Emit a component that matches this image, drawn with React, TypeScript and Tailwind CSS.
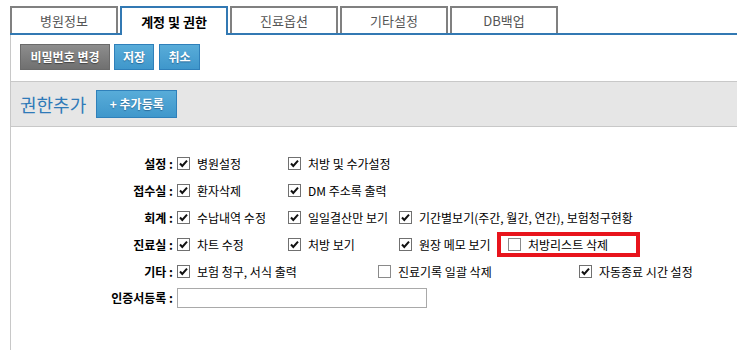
import React from "react";

// --- small pieces ---

const Check = ({ on }: { on: boolean }) => (
  <svg width="13" height="13" viewBox="0 0 13 13" className="shrink-0">
    <rect x="0.5" y="0.5" width="12" height="12" fill="#fff" stroke={on ? "#707070" : "#8a8a8a"} />
    {on && <path d="M3 6.5 L5.3 9 L10 3.6" fill="none" stroke="#111" strokeWidth="2" />}
  </svg>
);

const Item = ({ on = true, label, w }: { on?: boolean; label: React.ReactNode; w: string }) => (
  <div className={`flex items-center gap-[7px] ${w}`}>
    <Check on={on} />
    <span className="whitespace-nowrap">{label}</span>
  </div>
);

const Row = ({ title, children }: { title: string; children: React.ReactNode }) => (
  <div className="flex items-center h-[27px]">
    <div className="w-[166px] text-right pr-[4px] font-bold text-black whitespace-nowrap">{title} :</div>
    {children}
  </div>
);

const tabs = ["병원정보", "계정 및 권한", "진료옵션", "기타설정", "DB백업"];

export default function App() {
  return (
    <div
      className="w-[737px] h-[350px] overflow-hidden bg-white text-[12px] text-[#222]"
      style={{ fontFamily: '"Noto Sans CJK KR", "Noto Sans", sans-serif' }}
    >
      {/* Tabs */}
      <div className="pt-[6px] pl-[10px]">
        <div className="flex items-end gap-[2px] border-b-2 border-[#3279b3] h-[29px]">
          {tabs.map((t, i) =>
            i === 1 ? (
              <div
                key={t}
                className="w-[108px] h-[29px] -mb-[2px] bg-white border-2 border-b-0 border-[#3279b3] flex items-center justify-center font-bold text-[13px] text-black"
              >
                {t}
              </div>
            ) : (
              <div
                key={t}
                className="w-[108px] h-[27px] border-2 border-b-0 border-[#808080] flex items-center justify-center text-[13px] text-[#555]"
              >
                {t}
              </div>
            )
          )}
        </div>
      </div>

      {/* Panel */}
      <div className="ml-[10px] border-l border-[#c8c8c8] h-[320px]">
        {/* toolbar */}
        <div className="flex items-center gap-[4px] pl-[9px] pt-[9px]">
          <button className="h-[26px] w-[90px] bg-gradient-to-b from-[#8d8d8d] to-[#707070] border border-[#6a6a6a] text-white font-bold text-[12px] [text-shadow:0_1px_1px_#444]">
            비밀번호 변경
          </button>
          <button className="h-[26px] w-[40px] bg-gradient-to-b from-[#58acd9] to-[#3f97cb] border border-[#2f80ba] text-white font-bold text-[12px] [text-shadow:0_1px_1px_#2a6a99]">
            저장
          </button>
          <button className="ml-[1px] h-[26px] w-[41px] bg-gradient-to-b from-[#58acd9] to-[#3f97cb] border border-[#2f80ba] text-white font-bold text-[12px] [text-shadow:0_1px_1px_#2a6a99]">
            취소
          </button>
        </div>

        {/* section header */}
        <div className="mt-[11px] h-[46px] bg-[#e6e6e6] border-y border-[#c8c8c8] flex items-center pl-[9px] gap-[10px]">
          <span className="text-[18px] text-[#2f7ab8]">권한추가</span>
          <button className="h-[28px] w-[81px] bg-gradient-to-b from-[#58acd9] to-[#3f97cb] border border-[#2f80ba] text-white font-bold text-[12px] [text-shadow:0_1px_1px_#2a6a99]">
            + 추가등록
          </button>
        </div>

        {/* permission rows */}
        <div className="pt-[23px] text-black">
          <Row title="설정">
            <Item label="병원설정" w="w-[111px]" />
            <Item label="처방 및 수가설정" w="w-[111px]" />
          </Row>
          <Row title="접수실">
            <Item label="환자삭제" w="w-[111px]" />
            <Item label="DM 주소록 출력" w="w-[111px]" />
          </Row>
          <Row title="회계">
            <Item label="수납내역 수정" w="w-[111px]" />
            <Item label="일일결산만 보기" w="w-[111px]" />
            <Item label="기간별보기(주간, 월간, 연간), 보험청구현황" w="w-[300px]" />
          </Row>
          <Row title="진료실">
            <Item label="차트 수정" w="w-[111px]" />
            <Item label="처방 보기" w="w-[111px]" />
            <Item label="원장 메모 보기" w="w-[98px]" />
            <div className="h-[25px] w-[143px] border-4 border-[#e8141c] flex items-center pl-[7px]">
              <Item on={false} label="처방리스트 삭제" w="" />
            </div>
          </Row>
          <Row title="기타">
            <Item label="보험 청구, 서식 출력" w="w-[201px]" />
            <Item on={false} label="진료기록 일괄 삭제" w="w-[201px]" />
            <Item label="자동종료 시간 설정" w="w-[150px]" />
          </Row>
          <div className="flex items-center h-[26px]">
            <div className="w-[166px] text-right pr-[4px] font-bold whitespace-nowrap">인증서등록 :</div>
            <input className="h-[20px] w-[250px] border border-[#a9a9a9] bg-white outline-none" />
          </div>
        </div>
      </div>
    </div>
  );
}
